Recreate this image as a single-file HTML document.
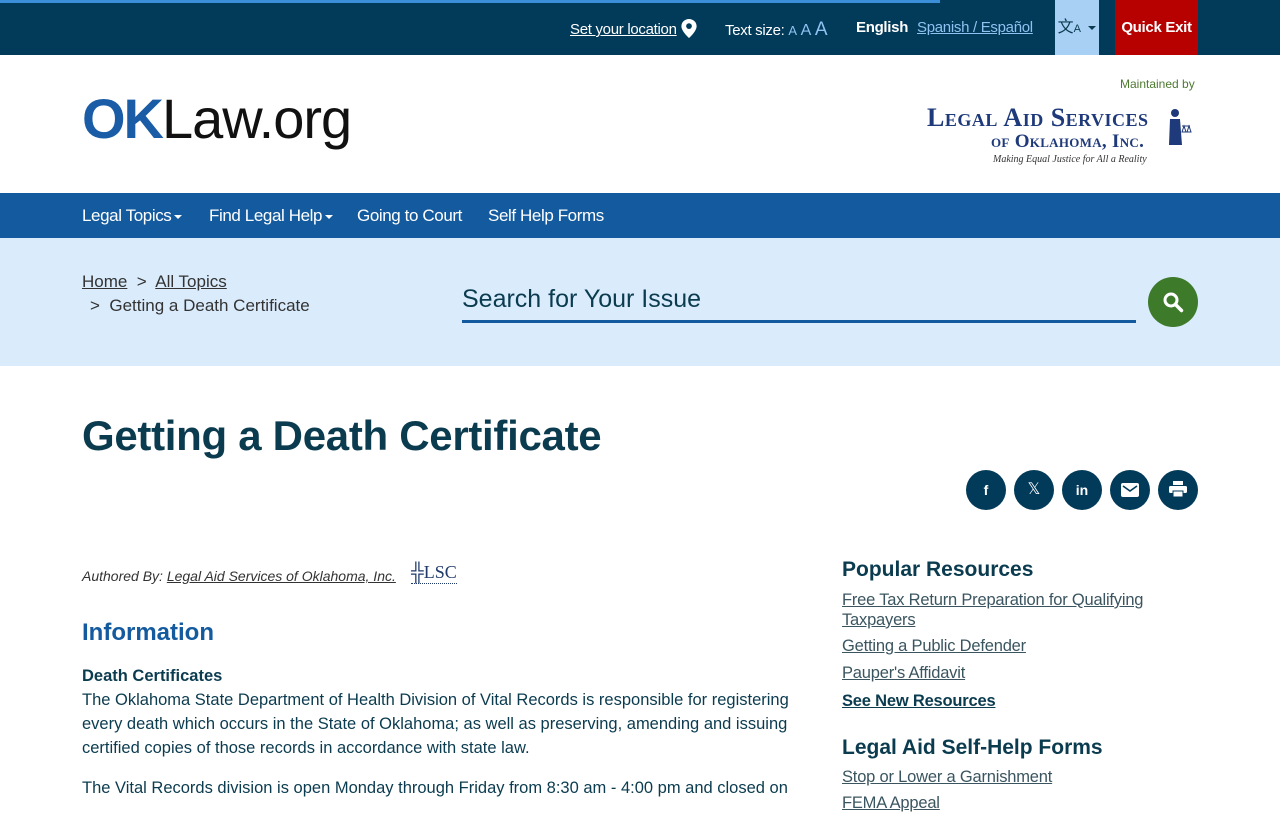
<!DOCTYPE html>
<html><head><meta charset="utf-8">
<style>
*{margin:0;padding:0;box-sizing:border-box}
body{width:1280px;height:800px;overflow:hidden;font-family:"Liberation Sans",sans-serif;background:#fff;color:#0b3b4f}
a{color:inherit}
.top{position:absolute;left:0;top:0;width:1280px;height:55px;background:#023a5a;color:#fff;font-size:15px}
.prog{position:absolute;left:0;top:0;width:940px;height:3px;background:#3b8ed8}
.top .it{position:absolute;top:19px;white-space:nowrap;letter-spacing:-0.3px}
.trans{position:absolute;left:1055px;top:0;width:44px;height:55px;background:#a8d0f5;color:#0b3b4f;font-size:16px;text-align:center;line-height:55px}
.qe{position:absolute;left:1115px;top:0;width:83px;height:55px;background:#b70000;color:#fff;font-weight:bold;font-size:15px;text-align:center;line-height:55px;letter-spacing:-0.3px}
.logo{position:absolute;left:82px;top:86px;font-size:56px;letter-spacing:-1px;color:#111}
.logo b{color:#1a5ca6;font-weight:900;letter-spacing:-2px}
.maint{position:absolute;left:1120px;top:77px;font-size:12px;color:#4d7a30}
.las{position:absolute;left:927px;top:104px;font-family:"Liberation Serif",serif;color:#1f3a7a;font-weight:bold}
.nav{position:absolute;left:0;top:193px;width:1280px;height:45px;background:#135a9e;color:#fff;font-size:17px}
.nav span{position:absolute;top:13px;letter-spacing:-0.4px}
.car{display:inline-block;border-left:4px solid transparent;border-right:4px solid transparent;border-top:4px solid #fff;vertical-align:middle;margin-left:3px}
.band{position:absolute;left:0;top:238px;width:1280px;height:128px;background:#daecfc}
h1{position:absolute;left:82px;top:412px;font-size:42px;font-weight:bold;color:#0b3b4f;letter-spacing:-0.3px}
.soc{position:absolute;top:470px;width:40px;height:40px;border-radius:50%;background:#023a5a;color:#fff;text-align:center;line-height:40px;font-size:14px;font-weight:bold}
.p{position:absolute;left:82px;font-size:16.5px;line-height:24px;color:#0b3b4f;width:722px}
.side a{position:absolute;left:842px;font-size:16.5px;color:#3b5560;letter-spacing:-0.2px;line-height:20px}
.side h3{position:absolute;left:842px;font-size:21px;color:#0b3b4f}
</style></head><body>
<div class="top"><div class="prog"></div>
<span class="it" style="left:570px"><u>Set your location</u> <svg width="16" height="19" viewBox="0 0 16 20" style="vertical-align:-4px"><path d="M8 0C3.6 0 0 3.4 0 7.6 0 13 8 20 8 20s8-7 8-12.4C16 3.4 12.4 0 8 0z" fill="#fff"/><circle cx="8" cy="7.5" r="3" fill="#023a5a"/></svg></span>
<span class="it" style="left:725px">Text size: <span style="color:#8fc2f0;font-size:13px">A</span> <span style="color:#8fc2f0;font-size:16px">A</span> <span style="color:#8fc2f0;font-size:19px">A</span></span>
<span class="it" style="left:856px;font-weight:bold">English</span>
<span class="it" style="left:917px;color:#8fc2f0"><u>Spanish / Español</u></span>
<div class="trans">文<span style="font-size:11px">A</span> <span class="car" style="border-top-color:#0b3b4f"></span></div>
<div class="qe">Quick Exit</div>
</div>
<div class="logo"><b>OK</b>Law.org</div>
<div class="maint">Maintained by</div>
<div class="las">
<div style="font-size:26px;letter-spacing:0.5px;font-variant:small-caps;line-height:28px">Legal Aid Services</div>
<div style="font-size:19px;font-variant:small-caps;margin-left:64px;line-height:20px;letter-spacing:0.3px">of Oklahoma, Inc.</div>
<div style="font-size:10px;font-style:italic;font-weight:normal;margin-left:66px;color:#333;margin-top:2px">Making Equal Justice for All a Reality</div>
</div>
<svg style="position:absolute;left:1164px;top:108px" width="28" height="42" viewBox="0 0 28 42"><circle cx="11" cy="5" r="4" fill="#1f3a7a"/><path d="M6 11h10l2 26H5z" fill="#1f3a7a"/><path d="M18 18h8M20 18l-2 6h4zM25 18l-2 6h4z" stroke="#1f3a7a" fill="none" stroke-width="1"/></svg>
<div class="nav"><span style="left:82px">Legal Topics<i class="car"></i></span><span style="left:209px">Find Legal Help<i class="car"></i></span><span style="left:357px">Going to Court</span><span style="left:488px">Self Help Forms</span></div>
<div class="band">
<div style="position:absolute;left:82px;top:34px;font-size:17px;color:#333"><u>Home</u> &nbsp;&gt;&nbsp; <u>All Topics</u></div>
<div style="position:absolute;left:90px;top:58px;font-size:17px;color:#333">&gt; &nbsp;Getting a Death Certificate</div>
<div style="position:absolute;left:462px;top:47px;font-size:25px;color:#0b3b4f">Search for Your Issue</div>
<div style="position:absolute;left:462px;top:82px;width:674px;height:3px;background:#135a9e"></div>
<div style="position:absolute;left:1148px;top:39px;width:50px;height:50px;border-radius:50%;background:#3d7a2a"><svg width="50" height="50" viewBox="0 0 50 50"><circle cx="23" cy="23" r="6" stroke="#fff" stroke-width="3" fill="none"/><path d="M27.5 27.5l6 6" stroke="#fff" stroke-width="3.5" stroke-linecap="round"/></svg></div>
</div>
<h1>Getting a Death Certificate</h1>
<div class="soc" style="left:966px">f</div>
<div class="soc" style="left:1014px;font-weight:normal;font-size:16px">𝕏</div>
<div class="soc" style="left:1062px">in</div>
<div class="soc" style="left:1110px"><svg width="18" height="14" viewBox="0 0 18 14" style="vertical-align:-2px"><rect width="18" height="14" rx="2" fill="#fff"/><path d="M2 3l7 5 7-5" stroke="#023a5a" stroke-width="1.6" fill="none"/></svg></div>
<div class="soc" style="left:1158px"><svg width="18" height="16" viewBox="0 0 18 16" style="vertical-align:-2px"><rect x="4" y="0" width="10" height="4" fill="#fff"/><rect x="0" y="5" width="18" height="7" rx="1.5" fill="#fff"/><rect x="4" y="10" width="10" height="6" fill="#fff" stroke="#023a5a" stroke-width="1"/></svg></div>
<div style="position:absolute;left:82px;top:568px;font-size:14px;font-style:italic;color:#333">Authored By: <u>Legal Aid Services of Oklahoma, Inc.</u></div>
<div style="position:absolute;left:411px;top:562px;font-family:'Liberation Serif',serif;font-size:18px;color:#1f3a6a;border-bottom:1px dotted #1f3a6a"><span style="font-weight:bold">╬</span>LSC</div>
<div style="position:absolute;left:82px;top:619px;font-size:24px;font-weight:bold;color:#135a9e">Information</div>
<div class="p" style="top:664px"><b>Death Certificates</b><br>The Oklahoma State Department of Health Division of Vital Records is responsible for registering every death which occurs in the State of Oklahoma; as well as preserving, amending and issuing certified copies of those records in accordance with state law.</div>
<div class="p" style="top:776px">The Vital Records division is open Monday through Friday from 8:30 am - 4:00 pm and closed on</div>
<div class="side">
<h3 style="top:558px">Popular Resources</h3>
<a style="top:590px"><u>Free Tax Return Preparation for Qualifying<br>Taxpayers</u></a>
<a style="top:636px"><u>Getting a Public Defender</u></a>
<a style="top:663px"><u>Pauper's Affidavit</u></a>
<a style="top:691px;font-weight:bold;color:#0b3b4f"><u>See New Resources</u></a>
<h3 style="top:736px">Legal Aid Self-Help Forms</h3>
<a style="top:767px"><u>Stop or Lower a Garnishment</u></a>
<a style="top:793px"><u>FEMA Appeal</u></a>
</div>
</body></html>
